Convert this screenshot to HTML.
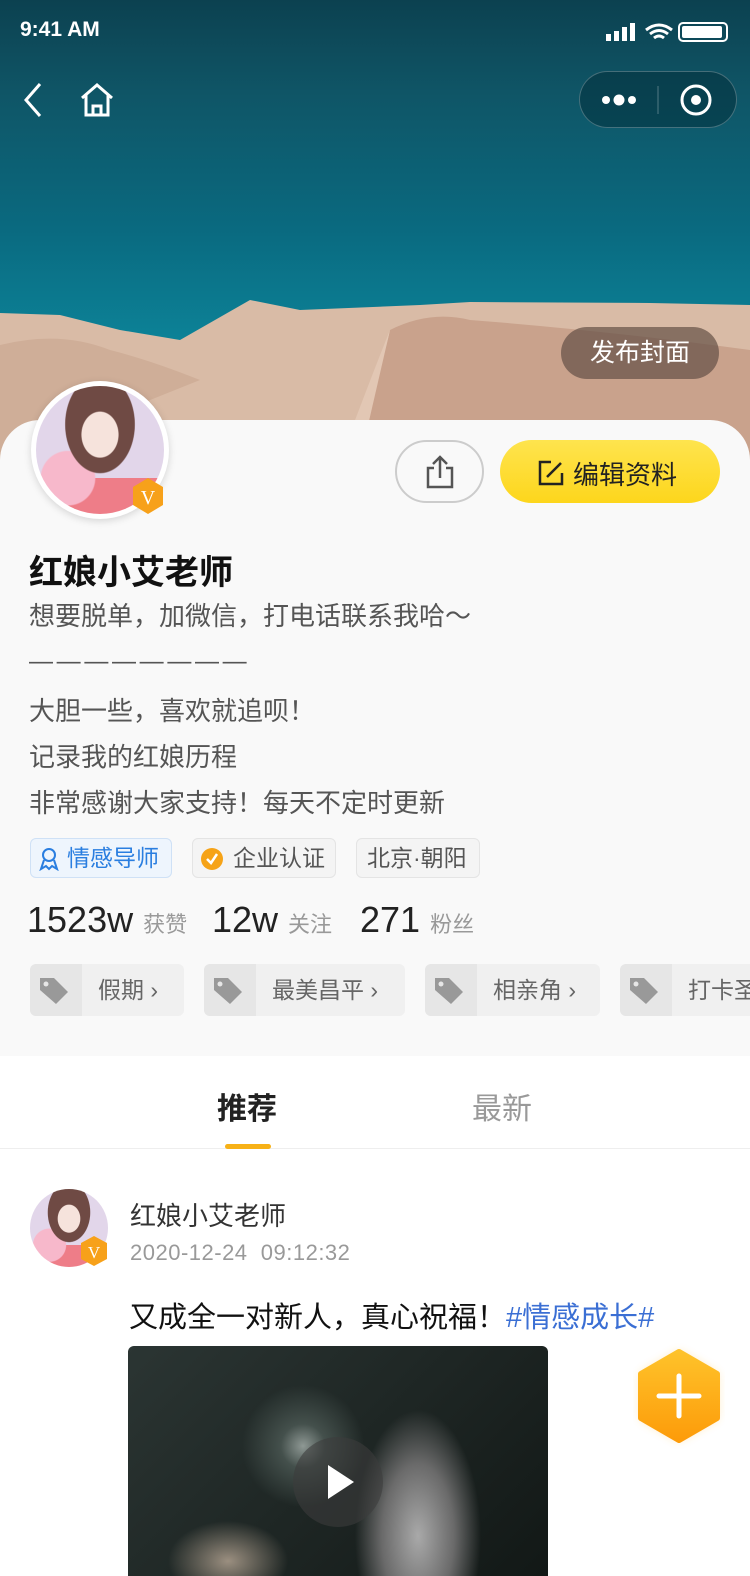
<!DOCTYPE html>
<html><head><meta charset="utf-8">
<style>
*{margin:0;padding:0;box-sizing:border-box}
body{width:750px;height:1562px;overflow:hidden;background:#fff;font-family:"Liberation Sans","Noto Sans CJK SC",sans-serif;position:relative}
.hero{position:absolute;left:0;top:0;width:750px;height:460px;background:linear-gradient(180deg,#0c4150 0%,#0f5566 20%,#0a6a80 50%,#0c8398 75%);overflow:hidden}
.status{position:absolute;top:18px;left:20px;color:#fff;font-size:21px;font-weight:bold}
.card{position:absolute;left:0;top:420px;width:750px;height:640px;background:#f9f9f9;border-radius:40px 40px 0 0}
.t{position:absolute;white-space:nowrap}
.tag{position:absolute;top:838px;height:40px;border-radius:6px;border:1px solid #e4e4e4;background:#f4f4f4;font-size:23px;color:#555;line-height:38px;padding:0 10px}
.chip{position:absolute;top:964px;height:52px;border-radius:6px;background:#f0f0f0;font-size:23px;color:#666;line-height:52px;overflow:hidden}
.chip .ic{position:absolute;left:0;top:0;width:52px;height:52px;background:#e6e6e6}
.av{background:radial-gradient(ellipse at 50% 38%,#f6e3dc 0 20%,transparent 21%),radial-gradient(ellipse at 50% 30%,#6f4a44 0 38%,transparent 39%),radial-gradient(circle at 25% 72%,#f7b8cb 0 20%,transparent 21%),linear-gradient(180deg,#e2d6ea 0 72%,#ee7d88 72%)}
</style></head><body>
<div class="hero">
<svg width="750" height="460" style="position:absolute;left:0;top:0">
<path d="M0 313 L60 315 L120 330 L180 340 L250 300 L300 310 L420 305 L470 302 L650 303 L750 305 L750 460 L0 460Z" fill="#d9bba6"/>
<path d="M0 345 Q60 330 110 350 Q150 360 200 380 L0 460Z" fill="#cfae98"/>
<path d="M340 460 Q380 380 390 330 Q430 310 470 320 Q600 330 750 350 L750 460Z" fill="#c9a28c"/>
<path d="M390 330 L360 460 L340 460 Q370 380 390 330Z" fill="#e2c7b4"/>
</svg></div>
<div class="status">9:41 AM</div>
<div style="position:absolute;right:22px;top:22px;width:50px;height:20px;border:2px solid #fff;border-radius:5px"><div style="margin:2px;width:40px;height:12px;background:#fff;border-radius:2px"></div></div>
<svg style="position:absolute;left:604px;top:22px" width="70" height="20"><rect x="2" y="12" width="5" height="7" fill="#fff"/><rect x="10" y="9" width="5" height="10" fill="#fff"/><rect x="18" y="5" width="5" height="14" fill="#fff"/><rect x="26" y="1" width="5" height="18" fill="#fff"/><path d="M42 8 Q55 -2 68 8 M46 12 Q55 5 64 12 M50 16 Q55 12 60 16" stroke="#fff" stroke-width="3" fill="none"/></svg>
<svg style="position:absolute;left:20px;top:82px" width="100" height="36"><path d="M20 2 L6 18 L20 34" stroke="#fff" stroke-width="3" fill="none"/><path d="M62 16 L77 3 L92 16 M66 13 V33 H88 V13 M73 33 V24 H81 V33" stroke="#fff" stroke-width="3" fill="none"/></svg>
<div style="position:absolute;left:579px;top:71px;width:158px;height:57px;border-radius:29px;background:rgba(0,40,50,.45);border:1px solid rgba(255,255,255,.25)"></div>
<svg style="position:absolute;left:600px;top:84px" width="120" height="32"><circle cx="6" cy="16" r="4" fill="#fff"/><circle cx="19" cy="16" r="5.5" fill="#fff"/><circle cx="32" cy="16" r="4" fill="#fff"/><line x1="58" y1="2" x2="58" y2="30" stroke="rgba(255,255,255,.3)"/><circle cx="96" cy="16" r="14" stroke="#fff" stroke-width="3" fill="none"/><circle cx="96" cy="16" r="5" fill="#fff"/></svg>
<div class="t" style="left:561px;top:327px;width:158px;height:52px;border-radius:26px;background:rgba(100,80,70,.7);color:#fff;font-size:25px;line-height:52px;text-align:center">发布封面</div>
<div class="card"></div>
<div style="position:absolute;left:31px;top:381px;width:138px;height:138px;border-radius:50%;background:#fff;box-shadow:0 2px 8px rgba(0,0,0,.15)"><div class="av" style="margin:5px;width:128px;height:128px;border-radius:50%"></div></div>
<svg style="position:absolute;left:131px;top:477px" width="34" height="38"><polygon points="17,1 32,10 32,28 17,37 2,28 2,10" fill="#f7a11a"/><text x="17" y="27" font-size="20" fill="#fff" text-anchor="middle" font-family="Liberation Serif">V</text></svg>
<div style="position:absolute;left:395px;top:440px;width:89px;height:63px;border-radius:32px;border:2px solid #ccc"></div>
<svg style="position:absolute;left:424px;top:454px" width="32" height="36"><path d="M10 14 H4 V33 H28 V14 H22 M16 24 V3 M9 10 L16 3 L23 10" stroke="#555" stroke-width="2.5" fill="none"/></svg>
<div style="position:absolute;left:500px;top:440px;width:220px;height:63px;border-radius:32px;background:linear-gradient(180deg,#fee44e,#fdd61c)"></div>
<svg style="position:absolute;left:537px;top:459px" width="28" height="28"><path d="M14 3 H3 V25 H25 V14 M10 18 L24 4" stroke="#222" stroke-width="2.5" fill="none"/></svg>
<div class="t" style="left:573px;top:455px;font-size:26px;color:#222">编辑资料</div>
<div class="t" style="left:29px;top:545px;font-size:34px;font-weight:bold;color:#111">红娘小艾老师</div>
<div class="t" style="left:29px;top:600px;font-size:26px;color:#555;line-height:32px">想要脱单，加微信，打电话联系我哈〜</div>
<div class="t" style="left:29px;top:648px;font-size:24px;color:#555;letter-spacing:-1.5px">— — — — — — — —</div>
<div class="t" style="left:29px;top:688px;font-size:26px;color:#555;line-height:46px">大胆一些，喜欢就追呗！<br>记录我的红娘历程<br>非常感谢大家支持！每天不定时更新</div>
<div class="tag" style="left:30px;width:142px;background:#eef5fd;border-color:#cfe1f6;color:#2a7ee0;padding-left:36px">情感导师</div>
<svg style="position:absolute;left:38px;top:847px" width="22" height="24"><circle cx="11" cy="8" r="6" stroke="#2a7ee0" stroke-width="2" fill="none"/><path d="M6 13 L3 22 L8 19 L11 22 L14 19 L19 22 L16 13" stroke="#2a7ee0" stroke-width="2" fill="none"/></svg>
<div class="tag" style="left:192px;width:144px;padding-left:40px">企业认证</div>
<svg style="position:absolute;left:200px;top:847px" width="24" height="24"><circle cx="12" cy="12" r="11" fill="#f6a317"/><path d="M7 12 L11 16 L17 7" stroke="#fff" stroke-width="2.5" fill="none"/></svg>
<div class="tag" style="left:356px;width:124px">北京·朝阳</div>
<div class="t" style="left:27px;top:899px;font-size:36px;color:#222">1523w <span style="font-size:22px;color:#999">获赞</span></div>
<div class="t" style="left:212px;top:899px;font-size:36px;color:#222">12w <span style="font-size:22px;color:#999">关注</span></div>
<div class="t" style="left:360px;top:899px;font-size:36px;color:#222">271 <span style="font-size:22px;color:#999">粉丝</span></div>
<div class="chip" style="left:30px;width:154px"><div class="ic"></div><span style="position:absolute;left:68px">假期 ›</span></div>
<div class="chip" style="left:204px;width:201px"><div class="ic"></div><span style="position:absolute;left:68px">最美昌平 ›</span></div>
<div class="chip" style="left:425px;width:175px"><div class="ic"></div><span style="position:absolute;left:68px">相亲角 ›</span></div>
<div class="chip" style="left:620px;width:160px"><div class="ic"></div><span style="position:absolute;left:68px">打卡圣地</span></div>
<svg style="position:absolute;left:0;top:974px" width="700" height="34"><g fill="#999"><path d="M40 4 H54 L68 18 L56 30 L40 16Z"/><path d="M214 4 H228 L242 18 L230 30 L214 16Z"/><path d="M435 4 H449 L463 18 L451 30 L435 16Z"/><path d="M630 4 H644 L658 18 L646 30 L630 16Z"/></g><g fill="#e6e6e6"><circle cx="46" cy="10" r="2.5"/><circle cx="220" cy="10" r="2.5"/><circle cx="441" cy="10" r="2.5"/><circle cx="636" cy="10" r="2.5"/></g></svg>
<div style="position:absolute;left:0;top:1056px;width:750px;height:93px;background:#fff;border-bottom:1px solid #eee"></div>
<div class="t" style="left:217px;top:1084px;font-size:30px;font-weight:bold;color:#222">推荐</div>
<div style="position:absolute;left:225px;top:1144px;width:46px;height:5px;border-radius:3px;background:#f7b117"></div>
<div class="t" style="left:472px;top:1084px;font-size:30px;color:#999">最新</div>
<div class="av" style="position:absolute;left:30px;top:1189px;width:78px;height:78px;border-radius:50%"></div>
<svg style="position:absolute;left:80px;top:1235px" width="28" height="32"><polygon points="14,1 27,8 27,24 14,31 1,24 1,8" fill="#f7a11a"/><text x="14" y="23" font-size="17" fill="#fff" text-anchor="middle" font-family="Liberation Serif">V</text></svg>
<div class="t" style="left:130px;top:1196px;font-size:26px;color:#333">红娘小艾老师</div>
<div class="t" style="left:130px;top:1240px;font-size:22px;color:#999;letter-spacing:0.5px">2020-12-24&nbsp; 09:12:32</div>
<div class="t" style="left:129px;top:1294px;font-size:29px;color:#111">又成全一对新人，真心祝福！<span style="color:#3b6fd4">#情感成长#</span></div>
<div style="position:absolute;left:128px;top:1346px;width:420px;height:230px;border-radius:6px 6px 0 0;background:radial-gradient(circle at 175px 100px,#8e9894 0,#44504c 8%,transparent 22%),radial-gradient(ellipse 90px 180px at 290px 190px,#a9a9a9 0,#6a6a6a 40%,transparent 70%),radial-gradient(ellipse 60px 40px at 100px 215px,#9b8f80 0,transparent 100%),linear-gradient(135deg,#2b3533,#121816)"></div>
<div style="position:absolute;left:293px;top:1437px;width:90px;height:90px;border-radius:50%;background:rgba(60,60,60,.6)"></div>
<svg style="position:absolute;left:325px;top:1462px" width="32" height="40"><polygon points="3,3 29,20 3,37" fill="#fff"/></svg>
<svg style="position:absolute;left:620px;top:1330px" width="120" height="130"><defs><linearGradient id="g" x1="0" y1="0" x2="0" y2="1"><stop offset="0" stop-color="#fec22a"/><stop offset="1" stop-color="#fd9c0a"/></linearGradient><filter id="f"><feGaussianBlur stdDeviation="5"/></filter></defs><polygon points="59,22 97,44 97,88 59,110 21,88 21,44" fill="#fdb020" opacity=".4" filter="url(#f)"/><polygon points="59,22 97,44 97,88 59,110 21,88 21,44" fill="url(#g)" stroke="url(#g)" stroke-width="6" stroke-linejoin="round"/><path d="M59 46 V86 M39 66 H79" stroke="#fff" stroke-width="5" stroke-linecap="round"/></svg>
</body></html>
